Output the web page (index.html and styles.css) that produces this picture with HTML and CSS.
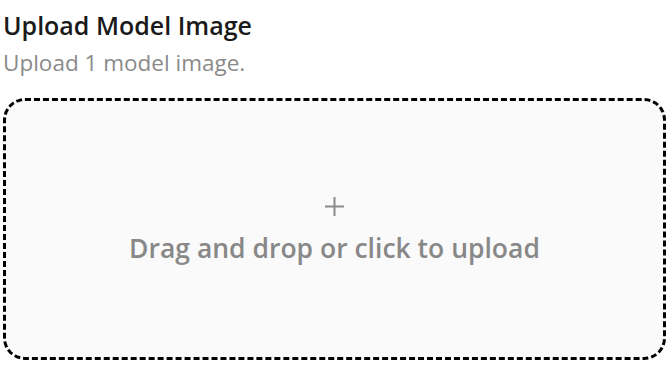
FILE: index.html
```html
<!DOCTYPE html>
<html>
<head>
<meta charset="utf-8">
<link rel="stylesheet" href="styles.css">
</head>
<body>
<div class="panel">
  <h2 class="title">Upload Model Image</h2>
  <p class="subtitle">Upload 1 model image.</p>
  <div class="dropzone">
    <svg class="plus" width="19" height="19" viewBox="0 0 19 19" aria-hidden="true"><path d="M9.5 0V19M0 9.5H19" stroke="#8a8a8a" stroke-width="2" fill="none"/></svg>
    <div class="drop-text">Drag and drop or click to upload</div>
  </div>
</div>
</body>
</html>
```
FILE: styles.css
```css
html, body {
  margin: 0;
  padding: 0;
  background: #ffffff;
}
body {
  font-family: "Open Sans", "Noto Sans", sans-serif;
}
.panel {
  padding: 9px 1px 0 3px;
  display: flex;
  flex-direction: column;
}
.title {
  margin: 0;
  font-size: 25px;
  font-weight: 600;
  line-height: 32px;
  color: #1a1a1a;
}
.subtitle {
  margin: 6px 0 0 0;
  font-size: 22.5px;
  line-height: 32px;
  color: #8a8a8a;
}
.dropzone {
  margin-top: 19px;
  height: 256px;
  border: 3px dashed #000;
  border-radius: 22px;
  background: #fafafa;
  display: flex;
  flex-direction: column;
  align-items: center;
  justify-content: center;
  color: #888888;
}
.plus {
  display: block;
  margin: 4px 0 14px;
}
.drop-text {
  font-size: 26.5px;
  font-weight: 600;
  line-height: 36px;
}
```
